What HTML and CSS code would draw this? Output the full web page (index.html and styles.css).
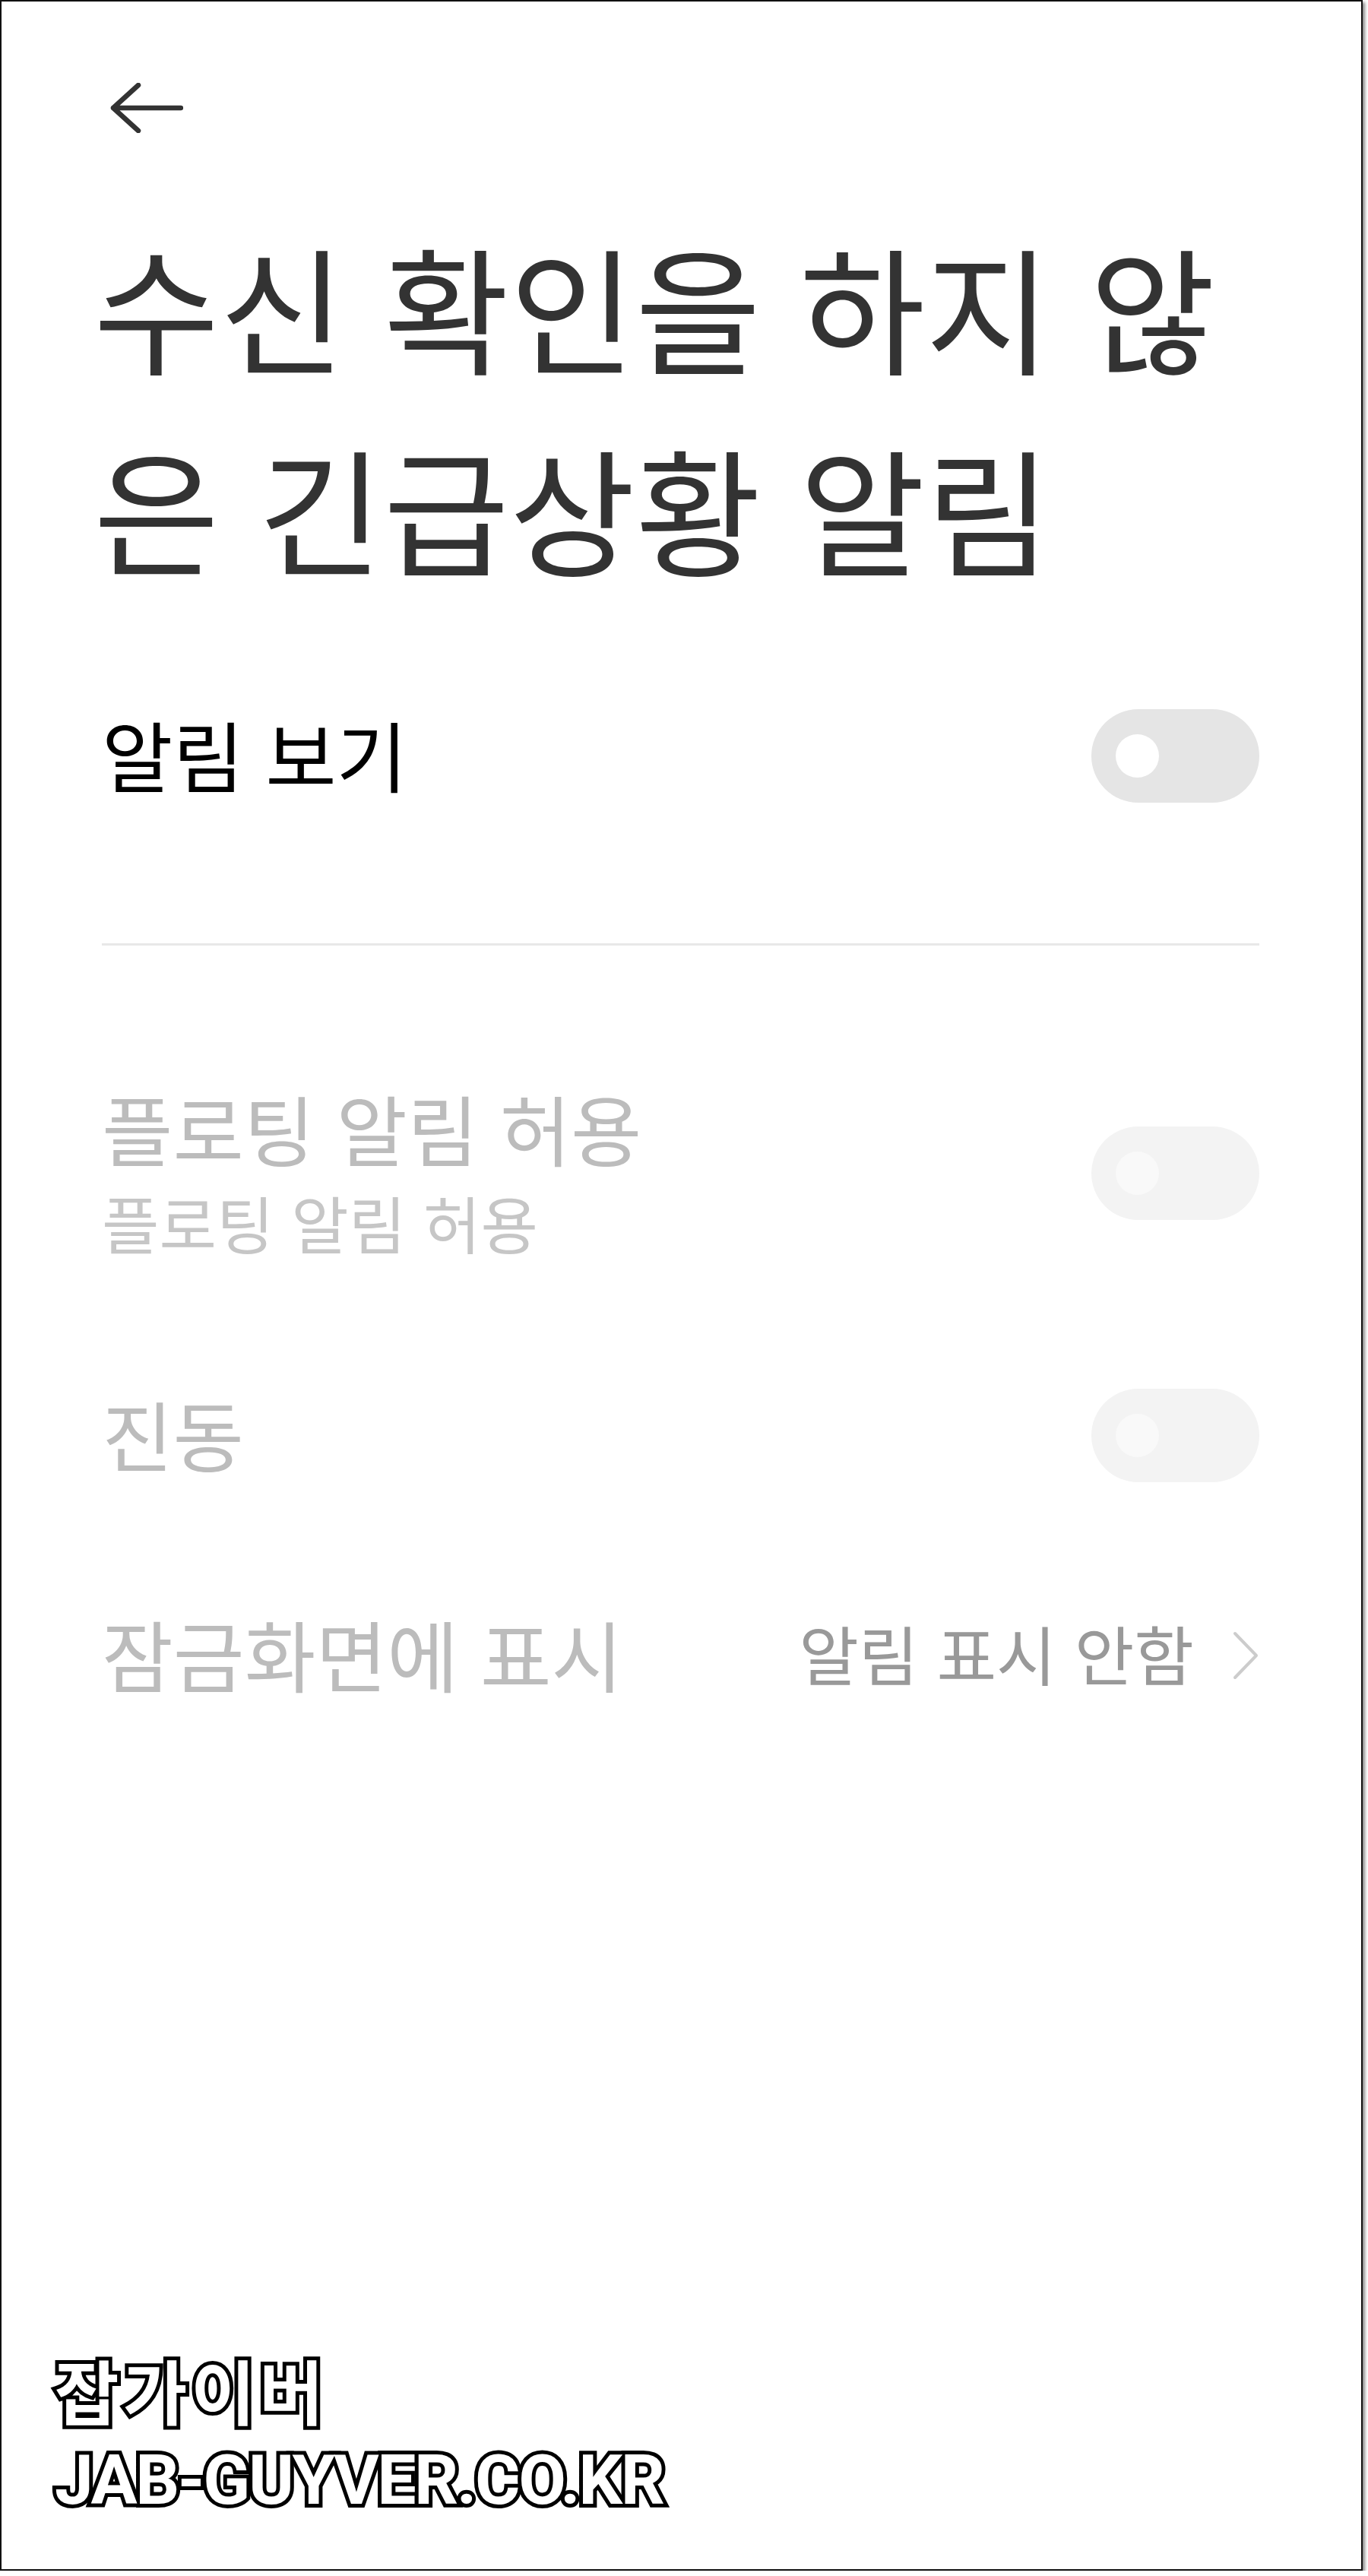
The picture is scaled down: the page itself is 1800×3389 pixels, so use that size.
FILE: index.html
```html
<!DOCTYPE html>
<html lang="ko">
<head>
  <meta charset="UTF-8" />
  <meta name="viewport" content="width=device-width, initial-scale=1.0"/>
  <title>수신 확인을 하지 않은 긴급상황 알림</title>
  <link rel="stylesheet" href="styles.css">
</head>
<body>

  <div class="frame">
    <a class="back" href="#" aria-label="뒤로">
      <svg width="96" height="66" viewBox="0 0 96 66">
        <path d="M37 3 L4 33 L37 63 M4 33 H93" fill="none" stroke="#333" stroke-width="6.5" stroke-linecap="round" stroke-linejoin="round"/>
      </svg>
    </a>

    <h1 class="title">수신 확인을 하지 않은 긴급상황 알림</h1>

    <div class="row row-main">
      <div class="label label-on single">알림 보기</div>
      <div class="toggle"><span class="knob"></span></div>
    </div>

    <div class="divider"></div>

    <div class="row row-float">
      <div>
        <div class="label">플로팅 알림 허용</div>
        <div class="sub">플로팅 알림 허용</div>
      </div>
      <div class="toggle off"><span class="knob"></span></div>
    </div>

    <div class="row row-vibrate">
      <div class="label single">진동</div>
      <div class="toggle off"><span class="knob"></span></div>
    </div>

    <div class="row row-lock">
      <div class="label">잠금화면에 표시</div>
      <div class="value">
        <span>알림 표시 안함</span>
        <svg class="chevron" width="36" height="64" viewBox="0 0 36 64">
          <path d="M4 3 L32 32 L4 61" fill="none" stroke="#ccc" stroke-width="4" stroke-linecap="round" stroke-linejoin="round"/>
        </svg>
      </div>
    </div>

    <div class="mark">
      <div class="mark-ko">잡가이버</div>
      <div class="mark-en">JAB-GUYVER.CO.KR</div>
    </div>
  </div>

</body>
</html>
```

FILE: styles.css
```css
:root {
  --text: #333;
  --muted: #bcbcbc;
  --line: #e8e8e8;
}
* { box-sizing: border-box; margin:0; padding:0; font-family:'Noto Sans CJK KR', 'Noto Sans', sans-serif; }
body { background:#fff; }

.frame {
  display:flex; flex-direction:column;
  width:1793px; height:3382px;
  padding:0 134px 0 132px;
  background:#fff;
  border:2px solid #111;
  box-shadow: 3px 3px 4px #888;
}

.back { display:block; height:66px; margin-top:107px; margin-left:11px; }

.title {
  margin-top:93px; margin-left:-11px; margin-right:-11px;
  font-size:180px; font-weight:400; line-height:265px; color:var(--text);
}

.row { display:flex; align-items:center; justify-content:space-between; }
.row-main { margin-top:135px; }
.row-float { margin-top:176px; }
.row-vibrate { margin-top:157px; }
.row-lock { margin-top:162px; }

.label { font-size:101.5px; line-height:125px; color:var(--muted); }
.label-on { color:#000; }
.label.single { line-height:115px; margin-bottom:8px; }
.sub { font-size:82px; line-height:125px; color:#c6c6c6; }
.row-float .toggle { margin-bottom:3px; }
.row-lock .label { font-size:102px; }

.value { display:flex; align-items:center; gap:50px; font-size:85.5px; line-height:125px; color:#999; }
.chevron { margin-top:7px; }

.toggle {
  display:flex; align-items:center;
  width:221px; height:123px; padding-left:32px;
  border-radius:62px;
  background:#e5e5e5;
}
.knob { display:block; width:57px; height:57px; border-radius:50%; background:#fff; }
.toggle.off { background:#f3f3f3; }
.toggle.off .knob { background:#f9f9f9; }

.divider { height:3px; margin-top:185px; background:var(--line); }

.mark { margin-top:auto; margin-left:-62px; padding-bottom:62px; }
.mark-ko, .mark-en {
  color:#fff; font-weight:700;
  -webkit-text-stroke:10px #000; paint-order:stroke fill;
}
.mark-ko { font-size:92px; line-height:130px; letter-spacing:5px; }
.mark-en { font-family:'Roboto', sans-serif; font-size:91px; line-height:110px; letter-spacing:-2.4px; }
```
